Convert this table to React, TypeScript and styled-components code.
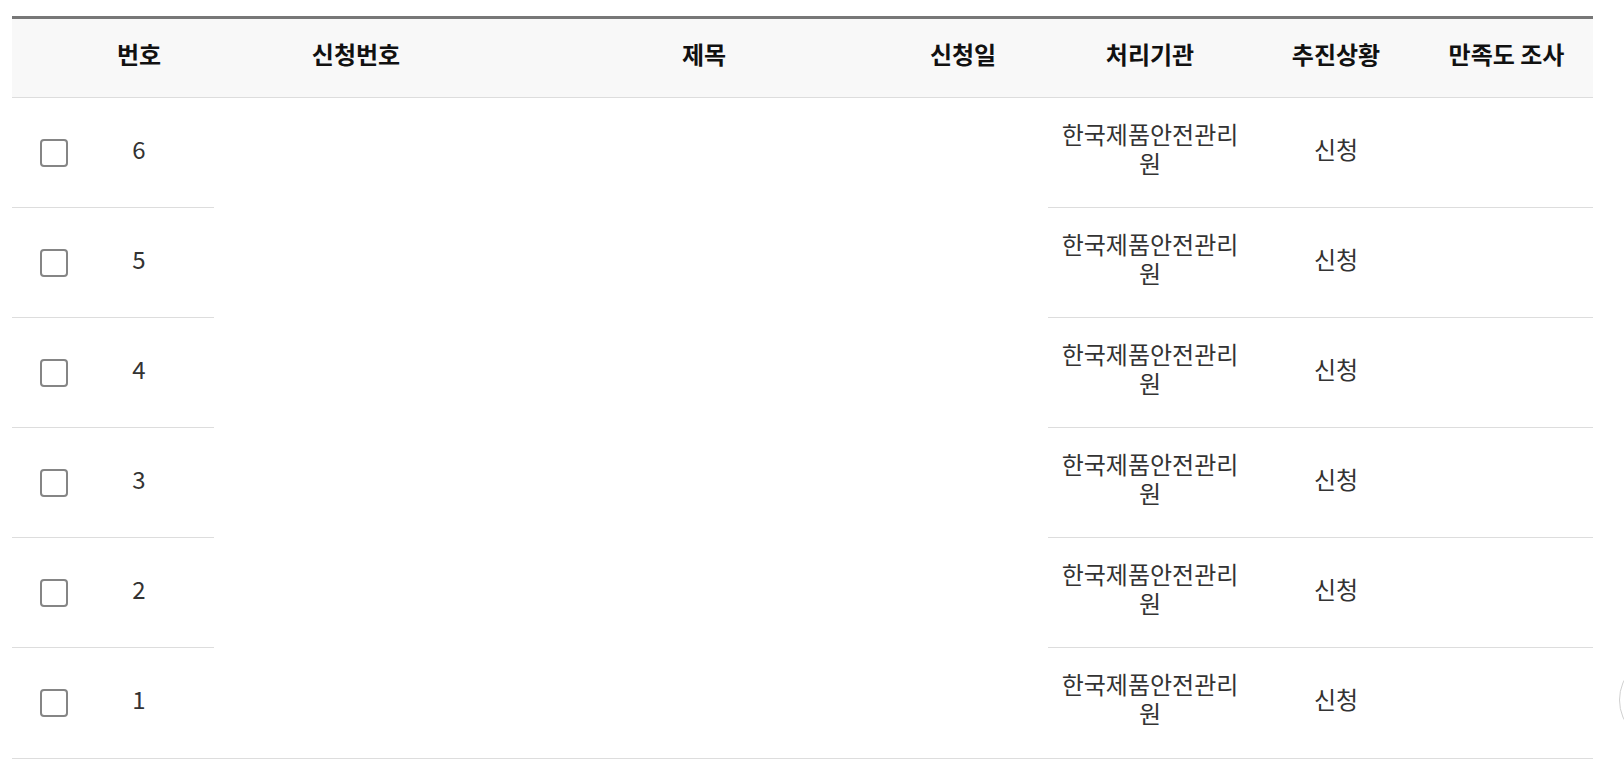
import styled, { createGlobalStyle } from "styled-components";

const GlobalStyle = createGlobalStyle`
  html, body {
    margin: 0;
    padding: 0;
    background: #fff;
  }
  body {
    font-family: "Noto Sans CJK KR", "Noto Sans", sans-serif;
    color: #333;
  }
`;

const COLS = "84px 86px 348px 348px 170px 204px 168px 173px";

const Page = styled.div`
  padding: 16px 31px 0 12px;
`;

const Table = styled.div`
  width: 1581px;
  border-top: 3px solid #777;
  border-bottom: 1px solid #ddd;
`;

const HeadRow = styled.div`
  display: grid;
  grid-template-columns: ${COLS};
  height: 78px;
  background: #f8f8f8;
  border-bottom: 1px solid #ddd;
`;

const Th = styled.div`
  display: flex;
  align-items: center;
  justify-content: center;
  padding-bottom: 10px;
  font-size: 24px;
  font-weight: 700;
  color: #111;
  white-space: nowrap;
`;

const Row = styled.div`
  display: grid;
  grid-template-columns: ${COLS};
  height: 110px;

  &:last-child > * {
    box-shadow: none;
    background: none;
  }
`;

const Td = styled.div<{ $line?: boolean; $stub?: number }>`
  display: flex;
  align-items: center;
  justify-content: center;
  padding: 0 10px 10px;
  font-size: 24px;
  line-height: 29px;
  color: #333;
  text-align: center;
  box-shadow: ${(p) => (p.$line ? "inset 0 -1px 0 #ddd" : "none")};
  background: ${(p) =>
    p.$stub ? `linear-gradient(#ddd, #ddd) left bottom / ${p.$stub}px 1px no-repeat` : "none"};
`;

const CheckCell = styled(Td)`
  justify-content: flex-start;
  padding: 0 0 0 28px;
`;

const Check = styled.input`
  appearance: none;
  margin: 0;
  width: 28px;
  height: 28px;
  border: 2px solid #858585;
  border-radius: 4px;
  background: #fff;
  box-sizing: border-box;
`;

const TopButton = styled.div`
  position: fixed;
  right: -85px;
  top: 655px;
  width: 90px;
  height: 90px;
  border-radius: 50%;
  border: 1px solid #d0d0d0;
  background: #fff;
  box-sizing: border-box;
`;

const heads = ["", "번호", "신청번호", "제목", "신청일", "처리기관", "추진상황", "만족도 조사"];

const rows = [6, 5, 4, 3, 2, 1].map((n) => ({
  no: n,
  org: "한국제품안전관리원",
  status: "신청",
}));

export default function App() {
  return (
    <Page>
      <GlobalStyle />
      <Table>
        <HeadRow>
          {heads.map((h, i) => (
            <Th key={i}>{h}</Th>
          ))}
        </HeadRow>
        {rows.map((r) => (
          <Row key={r.no}>
            <CheckCell $line>
              <Check type="checkbox" aria-label={`${r.no}번 선택`} />
            </CheckCell>
            <Td $line>{r.no}</Td>
            <Td $stub={32} />
            <Td />
            <Td />
            <Td $line>{r.org}</Td>
            <Td $line>{r.status}</Td>
            <Td $line />
          </Row>
        ))}
      </Table>
      <TopButton />
    </Page>
  );
}
